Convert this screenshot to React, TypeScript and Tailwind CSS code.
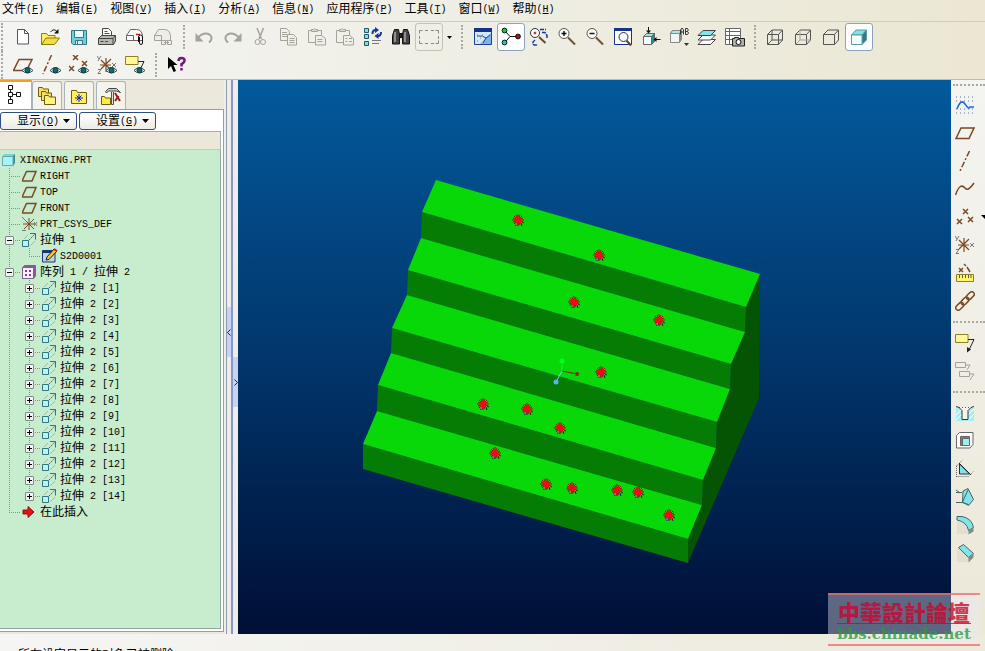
import { ReactNode } from "react";
import clsx from "clsx";

const GREY = "#a3a39a";
const BROWN = "#7a4a24";

/* ---------- text ---------- */

// Latin runs are half the width of a CJK glyph, so they get their own size
function Label({ text, hotkey }: { text: string; hotkey?: string }) {
  const runs = text.match(/[\u3000-\u9fff]+|[^\u3000-\u9fff]+/g) ?? [];
  return (
    <span className="flex items-center pt-0.5 leading-4 whitespace-pre">
      {runs.map((run, i) => (
        <span key={i} className={/[\u3000-\u9fff]/.test(run) ? "text-[12px]" : "text-[10px]"}>
          {run}
        </span>
      ))}
      {hotkey && (
        <span className="text-[10px]">
          (<span className="underline">{hotkey}</span>)
        </span>
      )}
    </span>
  );
}

/* ---------- icons ---------- */

function Icon({ children, stroke = "#333" }: { children: ReactNode; stroke?: string }) {
  return (
    <svg width="20" height="20" viewBox="0 0 20 20" fill="none" stroke={stroke} strokeWidth="1" className="shrink-0">
      {children}
    </svg>
  );
}

const Eye = () => (
  <g>
    <path d="M9 15.5Q14.5 9.5 20 15.5Q14.5 20.5 9 15.5z" fill="#fff" stroke="#2c4a50" />
    <circle cx="14.5" cy="15.2" r="2.6" fill="#0f6d6d" stroke="#083c40" />
  </g>
);

const NewIcon = () => (
  <Icon stroke="#555">
    <path d="M4.5 2.5h7l4 4v10.5h-11z" fill="#fff" />
    <path d="M11.5 2.5v4h4" />
  </Icon>
);

const OpenIcon = () => (
  <Icon stroke="#8a7a10">
    <path d="M.5 17.5v-11h5l1.5 2h7v3" fill="#fff06a" />
    <path d="M.5 17.5l4.5-6.5h13.5l-5 6.5z" fill="#f4dc3c" />
    <path d="M9.5 5q3-4 6.5-.5" stroke="#111" />
    <path d="M17.5 2v4.5h-4.5z" fill="#111" stroke="none" />
  </Icon>
);

const SaveIcon = () => (
  <Icon stroke="#3a7684">
    <path d="M2.5 3.5h15v14h-13.5l-1.5-1.5z" fill="#6cd0de" />
    <path d="M5.5 3.5h9v7h-9z" fill="#e8fbff" />
    <path d="M6.5 13.5h7v4h-7z" fill="#e6e6e6" />
    <path d="M8.5 14v3" />
  </Icon>
);

const PrintIcon = () => (
  <Icon stroke="#444">
    <path d="M5.5 9.5v-8h6l3 3v5" fill="#fff" />
    <path d="M7.5 4.5h3M7.5 6.5h5" stroke="#44a" />
    <path d="M1.5 11.5l3-3h14v5.5l-2 3.5h-15z" fill="#b8b8b0" />
    <path d="M1.5 11.5h14.5v6M16 11.5l2.5-3" />
    <path d="M3.5 14.5h3" stroke="#c00" />
    <path d="M8 14.5h3" stroke="#080" />
  </Icon>
);

const MailIcon = ({ dim = false }: { dim?: boolean }) => (
  <Icon stroke={dim ? GREY : "#666"}>
    <path d="M1.5 13.5v-5l4-6h6q5 0 6 6v5z" fill={dim ? "#eeede6" : "#fbfbfb"} />
    <path d="M1.5 8.5h7v5" />
    {!dim && <path d="M11 7.5h4" stroke="#c11" strokeWidth="1.5" />}
    {dim ? (
      <path d="M8.5 13.5h4v4h-4zM14.5 13.5h4v4h-4zM11 15.5h5" fill="#eeede6" />
    ) : (
      <path d="M14.5 10v6q0 1.5 1.5 1.5t1.5-1.5v-6q0-2-2-2t-2 2v5" stroke="#111" />
    )}
  </Icon>
);

const UndoIcon = ({ flip = false }: { flip?: boolean }) => (
  <Icon stroke={GREY}>
    <g transform={flip ? "translate(19 0) scale(-1 1)" : undefined}>
      <path d="M3 10.5Q9 4.5 14.5 7.5Q19 11 14 15.5" strokeWidth="2" />
      <path d="M.5 6v8.5h8z" fill={GREY} stroke="none" />
    </g>
  </Icon>
);

const CutIcon = () => (
  <Icon stroke={GREY}>
    <path d="M6 1l4.5 11M12.5 1l-4.5 11" strokeWidth="1.5" />
    <circle cx="6.5" cy="15" r="2.5" />
    <circle cx="12" cy="15" r="2.5" />
  </Icon>
);

const CopyIcon = () => (
  <Icon stroke={GREY}>
    <path d="M1.5 1.5h6l3 3v9h-9zM3 5.5h5M3 7.5h5M3 9.5h5" />
    <path d="M8.5 7.5h6l3 3v7.5h-9z" fill="#efeee8" />
    <path d="M10.5 11.5h5M10.5 13.5h5M10.5 15.5h5" />
  </Icon>
);

const PasteIcon = ({ special = false }: { special?: boolean }) => (
  <Icon stroke={GREY}>
    <path d="M1.5 3.5h13v12h-13z" />
    <path d="M4.5 4.5v-2h2q1-2 2 0h2v2z" fill="#dcdbd2" />
    <path d="M8.5 8.5h6l4 3v6.5h-10z" fill="#efeee8" />
    {special ? <path d="M10.5 11.5h2M14 11.5h3M10.5 14.5h2M14 14.5h3" /> : <path d="M10.5 12.5h5M10.5 14.5h5" />}
  </Icon>
);

const RegenIcon = () => (
  <Icon stroke="#256">
    <path d="M1.5 1.5h4v4h-4zM1.5 7.5h4v4h-4zM1.5 14.5h4v4h-4z" fill="#7fe0e4" />
    <path d="M9.5 7q0-4 3-4M18 5q0 4-3 4" stroke="#15389c" strokeWidth="2" />
    <path d="M12 0v6l4-3zM15.5 6v6l-4-3z" fill="#15389c" stroke="none" />
    <path d="M9 13.5h9M9 16.5h7" stroke="#777" />
  </Icon>
);

const FindIcon = () => (
  <Icon stroke="#111">
    <path d="M3.5 2.5h4l1 5v9.5h-7v-8.5zM12.5 2.5h4l2 6v8.5h-7v-9.5z" fill="#444" />
    <path d="M8.5 6.5h3v4h-3z" fill="#222" />
    <path d="M4 5v10M14 5v10" stroke="#ddd" />
  </Icon>
);

const SelectIcon = () => (
  <Icon stroke="#888">
    <path d="M.5 6.5v-3h3M6 3.5h3M12 3.5h3M16.5 3.5h3v3M19.5 9v3M19.5 13.5v3h-3M15 16.5h-3M9 16.5h-3M3.5 16.5h-3v-3M.5 12v-3" />
  </Icon>
);

const RepaintIcon = () => (
  <Icon stroke="#1c3f94">
    <path d="M1.5 2.5h17v15h-17z" fill="#d4e7fb" />
    <path d="M1 1h18v4h-18z" fill="#14328c" stroke="none" />
    <path d="M18 6v11h-11z" fill="#7ab4ea" stroke="none" />
    <path d="M4 9q6-1 9 2l-3 5M13 11l4-3" stroke="#274a80" />
    <path d="M4 8h1M7 11h1M4 14h1M9 8h1" stroke="#5a7ab0" />
  </Icon>
);

const SpinIcon = () => (
  <Icon stroke="#111">
    <path d="M4 4l5 5.5L4 15.5M9 9.5h9" />
    <circle cx="3.5" cy="3.5" r="2.4" fill="#18c838" />
    <circle cx="3.5" cy="15.5" r="2.4" fill="#20c8c8" />
    <circle cx="17" cy="9.5" r="2.4" fill="#a01818" />
  </Icon>
);

const OrientIcon = () => (
  <Icon stroke="#333">
    <circle cx="6" cy="6" r="4.5" fill="#fff" />
    <circle cx="6" cy="6" r="1" fill="#a33" stroke="#a33" />
    <path d="M10 10l6.5 6" stroke="#6b4a2c" strokeWidth="2" />
    <path d="M11 2.5h6M13 5.5h3l2 3v3M6 13q-4 3-1 5h4" stroke="#15389c" strokeWidth="1.5" strokeDasharray="4 1" />
  </Icon>
);

const ZoomIcon = ({ plus = false }: { plus?: boolean }) => (
  <Icon stroke="#555">
    <circle cx="7" cy="6.5" r="5" fill="#fbfbf8" />
    <path d={plus ? "M4.5 6.5h5M7 4v5" : "M4.5 6.5h5"} stroke="#111" strokeWidth="1.5" />
    <path d="M11 10.5l7 7" stroke="#6b5238" strokeWidth="2" />
  </Icon>
);

const RefitIcon = () => (
  <Icon stroke="#16348e">
    <path d="M1.5 1.5h17v16h-17z" fill="#fff" />
    <path d="M1 1h18v3h-18z" fill="#16348e" stroke="none" />
    <circle cx="10.5" cy="10" r="4.5" fill="#f4f8ff" stroke="#333" />
    <path d="M13.5 13.5l4.5 5" stroke="#5d4630" strokeWidth="2" />
  </Icon>
);

const ReorientIcon = () => (
  <Icon stroke="#666">
    <path d="M2.5 9.5l3-3h8l-3 3z" fill="#8fe6ea" />
    <path d="M2.5 9.5h8v8h-8z" fill="#f4ffff" />
    <path d="M10.5 9.5l3-3v8l-3 3z" fill="#2a8a90" />
    <path d="M7.5 0v4M14.5 12.5h5" stroke="#111" />
    <path d="M5 3.5h5l-2.5 3zM15.5 10v5l-3-2.5z" fill="#111" stroke="none" />
  </Icon>
);

const SavedViewIcon = () => (
  <Icon stroke="#888">
    <path d="M1.5 6.5l2-3h9v9l-2 3h-9z" fill="#8a8a84" />
    <path d="M1.5 6.5l2-3h9l-2 3z" fill="#a8e8ea" />
    <path d="M1.5 6.5h9v9h-9z" fill="#f2f6f2" />
    <path d="M11.5 7.5V3l1.5-2 1.5 2v4.5M11.5 5h3M16.5 7.5v-6h2q1.5 1.5 0 3 2 1.5 0 3zM16.5 4.5h2" stroke="#333" />
    <path d="M15 16h5l-2.5 3z" fill="#333" stroke="none" />
  </Icon>
);

const LayersIcon = () => (
  <Icon stroke="#444">
    <path d="M1 17.5l5-5h12.5l-5 5z" fill="#fff" />
    <path d="M1 13l5-5h12.5l-5 5z" fill="#fff" />
    <path d="M1 8.5l5-5h12.5l-5 5z" fill="#7fe6ea" />
  </Icon>
);

const ViewMgrIcon = () => (
  <Icon stroke="#666">
    <path d="M.5 1.5h15v16h-15z" fill="#fff" />
    <path d="M.5 4.5h15M.5 8.5h15M.5 12.5h15M4.5 1.5v16" />
    <path d="M7.5 11.5h2v-1h4v1h6v7.5h-12z" fill="#b0b0a8" stroke="#222" />
    <circle cx="13.5" cy="15" r="2.5" fill="#fff" stroke="#111" />
  </Icon>
);

const CubeIcon = ({ kind }: { kind: "wire" | "hidden" | "nohidden" | "shaded" }) =>
  kind === "shaded" ? (
    <Icon stroke="#5c9ca4">
      <path d="M2.5 8l4.5-5h10.5l-4.5 5z" fill="#7fe2e8" />
      <path d="M13 8l4.5-5v10l-4.5 4.5z" fill="#2d7c80" />
      <path d="M2.5 8h10.5v9.5h-10.5z" fill="#f4ffff" />
    </Icon>
  ) : (
    <Icon stroke="#555">
      <path d="M2.5 7.5h11v10h-11zM2.5 7.5l4.5-4.5h10.5v10l-4 4.5M13.5 7.5l4-4.5" />
      {kind === "wire" && <path d="M7 3v10h10.5M7 13l-4.5 4.5" />}
      {kind === "hidden" && <path d="M7 3v10h10.5M7 13l-4.5 4.5" stroke={GREY} />}
    </Icon>
  );

const PlaneIcon = ({ eye = false }: { eye?: boolean }) => (
  <Icon stroke={BROWN}>
    <path d={eye ? "M.5 15.5L6 4.5h13l-5.5 11z" : "M1 15.5L6 5h13l-5 10.5z"} strokeWidth="1.5" />
    {eye && <Eye />}
  </Icon>
);

const AxisIcon = ({ eye = false }: { eye?: boolean }) => (
  <Icon stroke={BROWN}>
    <path d={eye ? "M10.5 0L2 19" : "M14.5 0L5 20"} strokeWidth="1.5" strokeDasharray="6 2 2 2" />
    {eye && <Eye />}
  </Icon>
);

const PointsIcon = ({ eye = false }: { eye?: boolean }) => (
  <Icon stroke={BROWN}>
    <path
      d={
        eye
          ? "M4 0l5 5M9 0l-5 5M0 11l5 5M5 11l-5 5M13 6l5 5M18 6l-5 5"
          : "M8 2l5 5M13 2l-5 5M2 12l5 5M7 12l-5 5M13 10l5 5M18 10l-5 5"
      }
      strokeWidth="1.5"
    />
    {eye && <Eye />}
  </Icon>
);

const CsysIcon = ({ eye = false }: { eye?: boolean }) => (
  <Icon stroke={BROWN}>
    <path d="M9 3v14M4 5l10 10M14 4L4 14M3 10h11" strokeWidth="1.2" />
    <path d="M0 1l2 3M4 1L1 6M15 8l4 4M19 8l-4 4M1 14.5h3l-3 4h3" stroke="#777" />
    {eye && <Eye />}
  </Icon>
);

const NoteIcon = ({ eye = false }: { eye?: boolean }) => (
  <Icon>
    <path d="M.5 1.5h12.5v8h-12.5z" fill="#fff79a" stroke="#8b8224" />
    <path d="M13 6.5h6L13.5 18" stroke="#222" />
    {eye ? <Eye /> : <path d="M12 14v5.5l4-3z" fill="#222" stroke="none" />}
  </Icon>
);

const HelpIcon = () => (
  <Icon>
    <path d="M1 2v12l3-3 2.5 6 2.5-1-2.5-6h4z" fill="#000" stroke="none" />
    <path d="M11.5 6q0-3 3-3t3 2.5q0 2-3 3.5v2.5M14.5 13v2.5" stroke="#6d1a7a" strokeWidth="2.5" />
  </Icon>
);

const SketchIcon = () => (
  <Icon>
    <path d="M1 2h18M1 6h18M1 14h18M1 18h18" stroke="#5a70a8" strokeDasharray="1 3" />
    <path d="M2 14Q6 3 10 9T15 12L19 12" stroke="#1a6ce0" strokeWidth="1.5" />
  </Icon>
);

const CurveIcon = () => (
  <Icon stroke={BROWN}>
    <path d="M.5 16Q5 3 10 9Q13 13 19 4" strokeWidth="1.5" />
  </Icon>
);

const MeasureIcon = () => (
  <Icon stroke={BROWN}>
    <path d="M4 5l4 4M8 5l-4 4M9 1l2 2M12 4l3 5" strokeWidth="1.5" />
    <path d="M1.5 11.5h17v7h-17z" fill="#fff56a" stroke="#8b8224" />
    <path d="M4.5 12v3M7.5 12v3M10.5 12v3M13.5 12v3M16 12v3" stroke="#555" />
  </Icon>
);

const ChainIcon = () => (
  <Icon stroke={BROWN}>
    <g transform="rotate(-45 10 10)" strokeWidth="1.5">
      <rect x="-2" y="7.5" width="9" height="5" rx="2.5" />
      <rect x="5.5" y="7.5" width="9" height="5" rx="2.5" />
      <rect x="13" y="7.5" width="9" height="5" rx="2.5" />
    </g>
  </Icon>
);

const NotesDimIcon = () => (
  <Icon stroke={GREY}>
    <path d="M.5 1.5h10v5h-10zM4.5 10.5h10v5h-10zM11 4h4l-3 5M15 13h4l-4 6" />
  </Icon>
);

const HoleIcon = () => (
  <Icon stroke="#555">
    <path d="M1 5h18v13h-18z" fill="#a6eef0" stroke="none" />
    <path d="M1 12l6-6M1 17l7-7M13 17l6-6M13 12l6-6" stroke="#fff" />
    <path d="M4 4h12l-3 4v9h-6v-9z" fill="#f4f4ee" stroke="none" />
    <path d="M1 3.5l3 1 3 3v9h6v-9l3-3 3-1" stroke="#333" />
    <path d="M4 4.5h12" strokeDasharray="1 2" />
  </Icon>
);

const ShellIcon = () => (
  <Icon stroke="#666">
    <path d="M1.5 4.5l3-3h13.5v12l-3 3.5h-13.5z" fill="#fff" />
    <path d="M5.5 5.5h9v9h-9z" fill="#2f9ca0" />
    <path d="M7.5 7.5h7v7h-7z" fill="#9cf0f2" />
  </Icon>
);

const RibIcon = () => (
  <Icon stroke="#666">
    <path d="M4.5 5v10h10z" fill="#80e4e8" stroke="#333" />
    <path d="M1.5 7l6-6M1.5 7v11M1.5 17.5h12l5-5" strokeDasharray="1 1" />
    <path d="M4 4l12 12" stroke="#222" />
  </Icon>
);

const DraftIcon = () => (
  <Icon stroke="#466">
    <path d="M8 4l5-2.5 5.5 11-5 6-6-3.5z" fill="#80e4e8" />
    <path d="M1 5.5h6M1 15.5h6l6.5 2M1 3l4 3M7.5 15l6-13" />
  </Icon>
);

const RoundIcon = () => (
  <Icon stroke="#466">
    <path d="M2 6q9 2 11 10v3h-11z" fill="#e2ded0" stroke="none" />
    <path d="M2 1.5h5q10 2 11.5 11l-5 3Q12 7 2 5z" fill="#80e4e8" />
    <path d="M13.5 15.5l5-3v4l-5 3z" fill="#8a8a84" stroke="none" />
  </Icon>
);

const ChamferIcon = () => (
  <Icon stroke="#466">
    <path d="M2 5h4l8 9v5h-12z" fill="#e2ded0" stroke="none" />
    <path d="M3.5 4.5l5-3 10 9-5 4z" fill="#80e4e8" />
    <path d="M13.5 14.5l5-4v4l-5 5z" fill="#8a8a84" stroke="none" />
  </Icon>
);

/* ---------- tree icons ---------- */

function TreeIcon({ kind }: { kind: string }) {
  return (
    <svg width="16" height="16" viewBox="0 0 16 16" fill="none" className="mx-0.5 shrink-0">
      {kind === "part" && (
        <g>
          <path d="M1 4l2-2h10v9l-2 3h-10z" fill="#3c8a90" />
          <path d="M1 4l2-2h10l-2 2z" fill="#7fd4da" />
          <path d="M.5 4.5h10.5v9h-10.5z" fill="#a4f4f8" stroke="#6aa8b0" />
        </g>
      )}
      {kind === "plane" && <path d="M0 13l4.5-9.5h9.5l-4 9.5z" stroke={BROWN} strokeWidth="1.5" />}
      {kind === "csys" && (
        <g>
          <path d="M7 2v12M3 4l9 9M12 3L2 13M1 8h12" stroke={BROWN} />
          <path d="M0 1l4 4M12 6l3 4M15 6l-3 4M0 14.5h4" stroke="#777" />
        </g>
      )}
      {kind === "extrude" && (
        <g stroke="#2f7480">
          <path d="M.5 8.5h6v6h-6z" fill="#b4f6fa" />
          <path d="M8 1.5h5.5v6" />
          <path d="M7 8l6-6" stroke="#3c6a70" strokeDasharray="2 1" />
          <path d="M2 7l4-4M8 14l5-5" stroke="#9ac0a8" />
        </g>
      )}
      {kind === "sketch" && (
        <g>
          <path d="M.5 2.5h12.5v11.5h-12.5z" fill="#b8d4f0" stroke="#1c3470" />
          <path d="M1 3h12v2h-12z" fill="#1c3470" />
          <path d="M4 12l1-3 7-8 3 2-8 8.5z" fill="#f6c430" stroke="#222" />
          <path d="M12 1l3 2" stroke="#b22" strokeWidth="2" />
        </g>
      )}
      {kind === "pattern" && (
        <g>
          <path d="M.5 3.5l2-2h11v10.5l-2 2.5h-11z" fill="#8a5a9a" stroke="#80608c" />
          <path d="M.5 3.5h11v11h-11z" fill="#fbf0ff" stroke="#80608c" />
          <path d="M3 6h2v2h-2zM7 6h2v2h-2zM3 10h2v2h-2zM7 10h2v2h-2z" fill="#8838a0" />
        </g>
      )}
      {kind === "arrow" && <path d="M1 6h5v-3.5l6 5.5-6 5.5v-3.5h-5z" fill="#e81010" stroke="#901010" />}
    </svg>
  );
}

/* ---------- model tree ---------- */

type Row = { level: number; icon: string; text: string; toggle?: "+" | "-"; last?: boolean };

const rows: Row[] = [
  { level: 0, icon: "part", text: "XINGXING.PRT" },
  { level: 1, icon: "plane", text: "RIGHT" },
  { level: 1, icon: "plane", text: "TOP" },
  { level: 1, icon: "plane", text: "FRONT" },
  { level: 1, icon: "csys", text: "PRT_CSYS_DEF" },
  { level: 1, icon: "extrude", text: "拉伸 1", toggle: "-" },
  { level: 2, icon: "sketch", text: "S2D0001", last: true },
  { level: 1, icon: "pattern", text: "阵列 1 / 拉伸 2", toggle: "-" },
  ...Array.from({ length: 14 }, (_, i): Row => ({
    level: 2,
    icon: "extrude",
    text: `拉伸 2 [${i + 1}]`,
    toggle: "+",
    last: i === 13,
  })),
  { level: 1, icon: "arrow", text: "在此插入", last: true },
];

function Guide({ branch, last }: { branch?: boolean; last?: boolean }) {
  return (
    <svg width="20" height="16" viewBox="0 0 20 16" stroke="#7f9a84" strokeDasharray="1 1" className="shrink-0">
      <path d={last ? "M9.5 0v8" : "M9.5 0v16"} />
      {branch && <path d="M9 8.5h11" />}
    </svg>
  );
}

function TreeRow({ row }: { row: Row }) {
  return (
    <li className="flex h-4 items-center">
      {row.level === 2 && <Guide />}
      {row.level > 0 && (
        <span className="relative h-4 w-5 shrink-0">
          <Guide branch last={row.last} />
          {row.toggle && (
            <button
              aria-label={row.toggle === "+" ? "展开" : "折叠"}
              className="absolute top-1 left-[5px] flex size-[9px] items-center justify-center rounded-[1px] border border-[#7b8a8c] bg-[#f4f4ee]"
            >
              <svg width="5" height="5" viewBox="0 0 5 5" stroke="#000">
                <path d={row.toggle === "+" ? "M0 2.5h5M2.5 0v5" : "M0 2.5h5"} />
              </svg>
            </button>
          )}
        </span>
      )}
      <TreeIcon kind={row.icon} />
      <Label text={row.text} />
    </li>
  );
}

/* ---------- bars ---------- */

function ToolButton({ label, active, children }: { label: string; active?: boolean; children: ReactNode }) {
  return (
    <button
      aria-label={label}
      className={clsx(
        "flex size-7 shrink-0 items-center justify-center",
        active && "rounded-[3px] border border-[#8ba3bb] bg-white"
      )}
    >
      {children}
    </button>
  );
}

const Grip = () => (
  <span className="flex w-3.5 shrink-0 justify-center">
    <span className="my-0.5 border-l-2 border-dotted border-[#a9a99f]" />
  </span>
);

const HGrip = () => (
  <span className="flex h-3.5 shrink-0 items-center">
    <span className="ml-0.5 w-full border-t-2 border-dotted border-[#a9a99f]" />
  </span>
);

const menus = [
  ["文件", "F"],
  ["编辑", "E"],
  ["视图", "V"],
  ["插入", "I"],
  ["分析", "A"],
  ["信息", "N"],
  ["应用程序", "P"],
  ["工具", "T"],
  ["窗口", "W"],
  ["帮助", "H"],
];

function Toolbars() {
  return (
    <header className="shrink-0 border-b border-[#b4c0c0] bg-linear-to-r from-[#f4f4f2] via-[#efeee4] to-[#ebe7d3]">
      <nav className="flex h-[22px] items-start gap-3 border-b border-[#cfcdbf] pl-0.5">
        {menus.map(([text, key]) => (
          <button key={key}>
            <Label text={text} hotkey={key} />
          </button>
        ))}
      </nav>
      <div className="flex h-[29px] pt-px">
        <span className="ml-px w-2 shrink-0 border-l-2 border-dotted border-[#a9a99f]" />
        <ToolButton label="新建"><NewIcon /></ToolButton>
        <ToolButton label="打开"><OpenIcon /></ToolButton>
        <ToolButton label="保存"><SaveIcon /></ToolButton>
        <ToolButton label="打印"><PrintIcon /></ToolButton>
        <ToolButton label="发送附件"><MailIcon /></ToolButton>
        <ToolButton label="发送链接"><MailIcon dim /></ToolButton>
        <Grip />
        <ToolButton label="撤销"><UndoIcon /></ToolButton>
        <ToolButton label="重做"><UndoIcon flip /></ToolButton>
        <ToolButton label="剪切"><CutIcon /></ToolButton>
        <ToolButton label="复制"><CopyIcon /></ToolButton>
        <ToolButton label="粘贴"><PasteIcon /></ToolButton>
        <ToolButton label="选择性粘贴"><PasteIcon special /></ToolButton>
        <ToolButton label="再生"><RegenIcon /></ToolButton>
        <ToolButton label="查找"><FindIcon /></ToolButton>
        <button aria-label="选取框" className="flex size-7 shrink-0 items-center justify-center rounded-[3px] border border-[#c4c3b8]">
          <SelectIcon />
        </button>
        <button aria-label="选取选项" className="flex w-3 shrink-0 items-center justify-center">
          <svg width="5" height="3" viewBox="0 0 5 3"><path d="M0 0h5L2.5 3z" /></svg>
        </button>
        <Grip />
        <ToolButton label="重画"><RepaintIcon /></ToolButton>
        <ToolButton label="旋转中心" active><SpinIcon /></ToolButton>
        <ToolButton label="定向模式"><OrientIcon /></ToolButton>
        <ToolButton label="放大"><ZoomIcon plus /></ToolButton>
        <ToolButton label="缩小"><ZoomIcon /></ToolButton>
        <ToolButton label="重新调整"><RefitIcon /></ToolButton>
        <ToolButton label="重定向"><ReorientIcon /></ToolButton>
        <ToolButton label="已保存视图"><SavedViewIcon /></ToolButton>
        <ToolButton label="层"><LayersIcon /></ToolButton>
        <ToolButton label="视图管理器"><ViewMgrIcon /></ToolButton>
        <span className="flex w-3 shrink-0 justify-center">
          <span className="my-0.5 border-l-2 border-dotted border-[#a9a99f]" />
        </span>
        <ToolButton label="线框"><CubeIcon kind="wire" /></ToolButton>
        <ToolButton label="隐藏线"><CubeIcon kind="hidden" /></ToolButton>
        <ToolButton label="无隐藏线"><CubeIcon kind="nohidden" /></ToolButton>
        <ToolButton label="着色" active><CubeIcon kind="shaded" /></ToolButton>
      </div>
      <div className="flex h-7">
        <span className="ml-px w-2 shrink-0 border-l-2 border-dotted border-[#a9a99f]" />
        <ToolButton label="显示平面"><PlaneIcon eye /></ToolButton>
        <ToolButton label="显示轴"><AxisIcon eye /></ToolButton>
        <ToolButton label="显示点"><PointsIcon eye /></ToolButton>
        <ToolButton label="显示坐标系"><CsysIcon eye /></ToolButton>
        <ToolButton label="显示注释"><NoteIcon eye /></ToolButton>
        <Grip />
        <ToolButton label="上下文帮助"><HelpIcon /></ToolButton>
      </div>
    </header>
  );
}

function SideTools() {
  return (
    <aside className="flex w-[34px] shrink-0 flex-col overflow-hidden bg-linear-to-b from-[#f4f4f1] to-[#ece8d8]">
      <span className="h-[11px] shrink-0 pt-1">
        <span className="ml-0.5 block border-t-2 border-dotted border-[#a9a99f]" />
      </span>
      <ToolButton label="草绘"><SketchIcon /></ToolButton>
      <ToolButton label="基准平面"><PlaneIcon /></ToolButton>
      <ToolButton label="基准轴"><AxisIcon /></ToolButton>
      <ToolButton label="基准曲线"><CurveIcon /></ToolButton>
      <div className="flex items-center justify-between">
        <ToolButton label="基准点"><PointsIcon /></ToolButton>
        <svg width="4" height="4" viewBox="0 0 4 4"><path d="M0 0h4v4z" /></svg>
      </div>
      <ToolButton label="坐标系"><CsysIcon /></ToolButton>
      <ToolButton label="测量"><MeasureIcon /></ToolButton>
      <ToolButton label="参照"><ChainIcon /></ToolButton>
      <HGrip />
      <ToolButton label="注释"><NoteIcon /></ToolButton>
      <ToolButton label="注释传播"><NotesDimIcon /></ToolButton>
      <HGrip />
      <ToolButton label="孔"><HoleIcon /></ToolButton>
      <ToolButton label="壳"><ShellIcon /></ToolButton>
      <ToolButton label="筋"><RibIcon /></ToolButton>
      <ToolButton label="拔模"><DraftIcon /></ToolButton>
      <ToolButton label="倒圆角"><RoundIcon /></ToolButton>
      <ToolButton label="倒角"><ChamferIcon /></ToolButton>
    </aside>
  );
}

/* ---------- navigator ---------- */

const tab = "flex h-7 w-[30px] items-center justify-center rounded-t-[3px] border border-b-0 border-[#a9b4ba] bg-[#f4f3ec]";

function Navigator() {
  return (
    <aside className="flex w-56 shrink-0 flex-col pb-0.5">
      <div className="flex h-[29px] items-end">
        <button
          aria-label="模型树"
          className="flex h-full w-8 items-center justify-center border-t-2 border-r border-t-[#f0a020] border-r-[#a9b4ba] bg-white pr-1 pb-1"
        >
          <Icon stroke="#111">
            <path d="M4.5 1.5h4v4h-4zM4.5 8.5h4v4h-4zM4.5 15.5h4v4h-4zM12.5 8.5h4v4h-4zM6.5 5.5v3M6.5 12.5v3M8.5 10.5h4" />
          </Icon>
        </button>
        <div className="flex gap-0.5">
          <button aria-label="文件夹浏览器" className={tab}>
            <Icon stroke="#6a5e10">
              <path d="M1.5 10.5v-9h4l1 1.5h5v7.5z" fill="#f4e068" />
              <path d="M4.5 14.5v-9h4l1 1.5h5v7.5z" fill="#f4e068" />
              <path d="M7.5 18.5v-9h4l1 1.5h6v7.5z" fill="#fff27a" />
            </Icon>
          </button>
          <button aria-label="收藏夹" className={tab}>
            <Icon stroke="#6a5e10">
              <path d="M2.5 17.5v-13h5l1 2h9v11z" fill="#fff060" />
              <path d="M10 8v8M6 12h8M7.5 9.5l5 5M12.5 9.5l-5 5" stroke="#1a1ac0" />
            </Icon>
          </button>
          <button aria-label="连接" className={tab}>
            <Icon stroke="#6a5e10">
              <path d="M10.5 6v12.5h2v-12.5" fill="#e8e0c8" stroke="#555" />
              <path d="M.5 18.5v-8h3l1 1.5h5v6.5z" fill="#ffe948" />
              <path d="M4.5 5.5l3-3h8l4 4-4-1.5h-8l-2 2z" fill="#c4d0d8" stroke="#444" />
              <path d="M14 7l5 8M17.5 10l-3.5 5" stroke="#a11a1a" strokeWidth="2" />
            </Icon>
          </button>
        </div>
      </div>
      <div className="flex min-h-0 flex-1 flex-col border-t border-r border-b border-[#90a0a8] bg-white pr-0.5 pb-0.5">
        <div className="flex gap-0.5 pt-0.5 pb-px">
          {[
            ["显示", "O"],
            ["设置", "G"],
          ].map(([text, key]) => (
            <button
              key={key}
              className="flex h-[18px] w-[77px] items-center justify-end gap-1 rounded-[3px] border border-[#2b4f80] bg-linear-to-b from-white to-[#ecebe4] pr-1.5"
            >
              <Label text={text} hotkey={key} />
              <svg width="7" height="4" viewBox="0 0 7 4"><path d="M0 0h7L3.5 4z" /></svg>
            </button>
          ))}
        </div>
        <div className="h-[19px] shrink-0 border border-l-0 border-[#a5b0ae] border-b-[#c9c7b8] bg-[#ebe8da]" />
        <ul className="min-h-0 flex-1 overflow-hidden border-r border-b border-[#8fa69c] bg-[#c8ecce] pt-0.5">
          {rows.map((row, i) => (
            <TreeRow key={i} row={row} />
          ))}
        </ul>
      </div>
    </aside>
  );
}

function Sashes() {
  return (
    <div className="flex w-3.5 shrink-0 bg-[#eeede8]">
      <div className="flex w-[9px] flex-col border-r-2 border-[#8b96c8] pl-0.5">
        <div className="flex flex-1 items-end border-l border-[#8c9ab0]">
          <button aria-label="收起导航器" className="flex h-[50px] w-full items-center justify-center bg-[#c5d3f5]">
            <svg width="4" height="7" viewBox="0 0 4 7" fill="none" stroke="#223"><path d="M3.5.5l-3 3 3 3" /></svg>
          </button>
        </div>
        <div className="flex-1 border-l border-[#8c9ab0]" />
      </div>
      <div className="flex w-[5px] flex-col">
        <div className="flex-1" />
        <div className="flex-1">
          <button aria-label="展开浏览器" className="flex h-[50px] w-full items-center justify-center bg-[#c5d3f5]">
            <svg width="4" height="7" viewBox="0 0 4 7" fill="none" stroke="#223"><path d="M.5.5l3 3-3 3" /></svg>
          </button>
        </div>
      </div>
    </div>
  );
}

/* ---------- model ---------- */

const treads = [
  "436,180 760,274 746,307 422,212",
  "421,238 745,332 731,364 408,270",
  "407,295 730,389 717,422 392,328",
  "391,353 716,448 703,480 378,385",
  "377,411 702,505 688,539 363,444",
];

const risers = [
  "422,212 746,307 745,332 421,238",
  "408,270 731,364 730,389 407,295",
  "392,328 717,422 716,448 391,353",
  "378,385 703,480 702,505 377,411",
  "363,444 688,539 688,563 363,469",
];

const stars = [
  [518, 220], [599, 255], [574, 302], [659, 320], [601, 372], [483, 404], [527, 409],
  [560, 428], [495, 453], [546, 484], [572, 488], [617, 490], [638, 492], [669, 515],
];

function Viewport() {
  return (
    <main className="min-w-0 flex-1 bg-linear-to-b from-[#025a9c] via-[#02366c] to-[#000f36]">
      <svg viewBox="238 80 713 554" className="size-full" role="img" aria-label="XINGXING.PRT">
        <polygon
          points="760,274 759,398 688,563 688,539 702,505 703,480 716,448 717,422 730,389 731,364 745,332 746,307"
          fill="#045404"
        />
        {risers.map((p) => <polygon key={p} points={p} fill="#057d05" />)}
        {treads.map((p) => <polygon key={p} points={p} fill="#08d808" />)}
        {stars.map(([x, y]) => (
          <g key={`${x}-${y}`} transform={`translate(${x} ${y})`}>
            <path d="M-3 2l1 4M0 3v3M3 3l1 3M4 2l2 1" stroke="#142060" />
            <path d="M-6 0H6M0-6V5M-4-4L4 4M4-4L-4 4M-5-2L5 2M5-2L-5 2M-2-5L2 5M2-5L-2 5" stroke="#a01408" />
            <circle r="3.5" fill="#f40818" />
            <path d="M-3 4h2" stroke="#c8a0b0" />
          </g>
        ))}
        <path d="M562 371v-10" stroke="#20f040" />
        <path d="M562 371l15 3" stroke="#702010" />
        <path d="M562 371l-6 11" stroke="#78c8f0" />
        <circle cx="562" cy="361" r="2.5" fill="#00ff20" />
        <circle cx="577" cy="374" r="2" fill="#8a2010" />
        <circle cx="556" cy="382" r="2.5" fill="#5cb0f0" />
      </svg>
    </main>
  );
}

export default function App() {
  return (
    <div className="relative flex h-screen flex-col overflow-hidden bg-[#ece9dc] font-['Liberation_Mono','Noto_Sans_CJK_SC',monospace] text-black">
      <Toolbars />
      <div className="flex min-h-0 flex-1">
        <Navigator />
        <Sashes />
        <Viewport />
        <SideTools />
      </div>
      <footer className="h-[17px] shrink-0 overflow-hidden bg-linear-to-r from-[#f5f5f4] to-[#edeadb] pt-3 pl-[18px]">
        <Label text="所有设定显示的对象已被删除" />
      </footer>
      <div className="absolute right-[5px] bottom-[5px] flex w-[152px] flex-col items-center border-y-2 border-[#f06868]/75 bg-[#e8e8f0]/40 pt-1">
        <span className="font-['Noto_Sans_CJK_TC',sans-serif] text-[22px] leading-6 font-black text-[#c80830]/80">中華設計論壇</span>
        <span className="w-[134px] border-t border-[#c80830]/80" />
        <span className="font-['DejaVu_Serif',serif] text-[15px] leading-5 font-bold text-[#2c9a44]/80">bbs.chinade.net</span>
      </div>
    </div>
  );
}
